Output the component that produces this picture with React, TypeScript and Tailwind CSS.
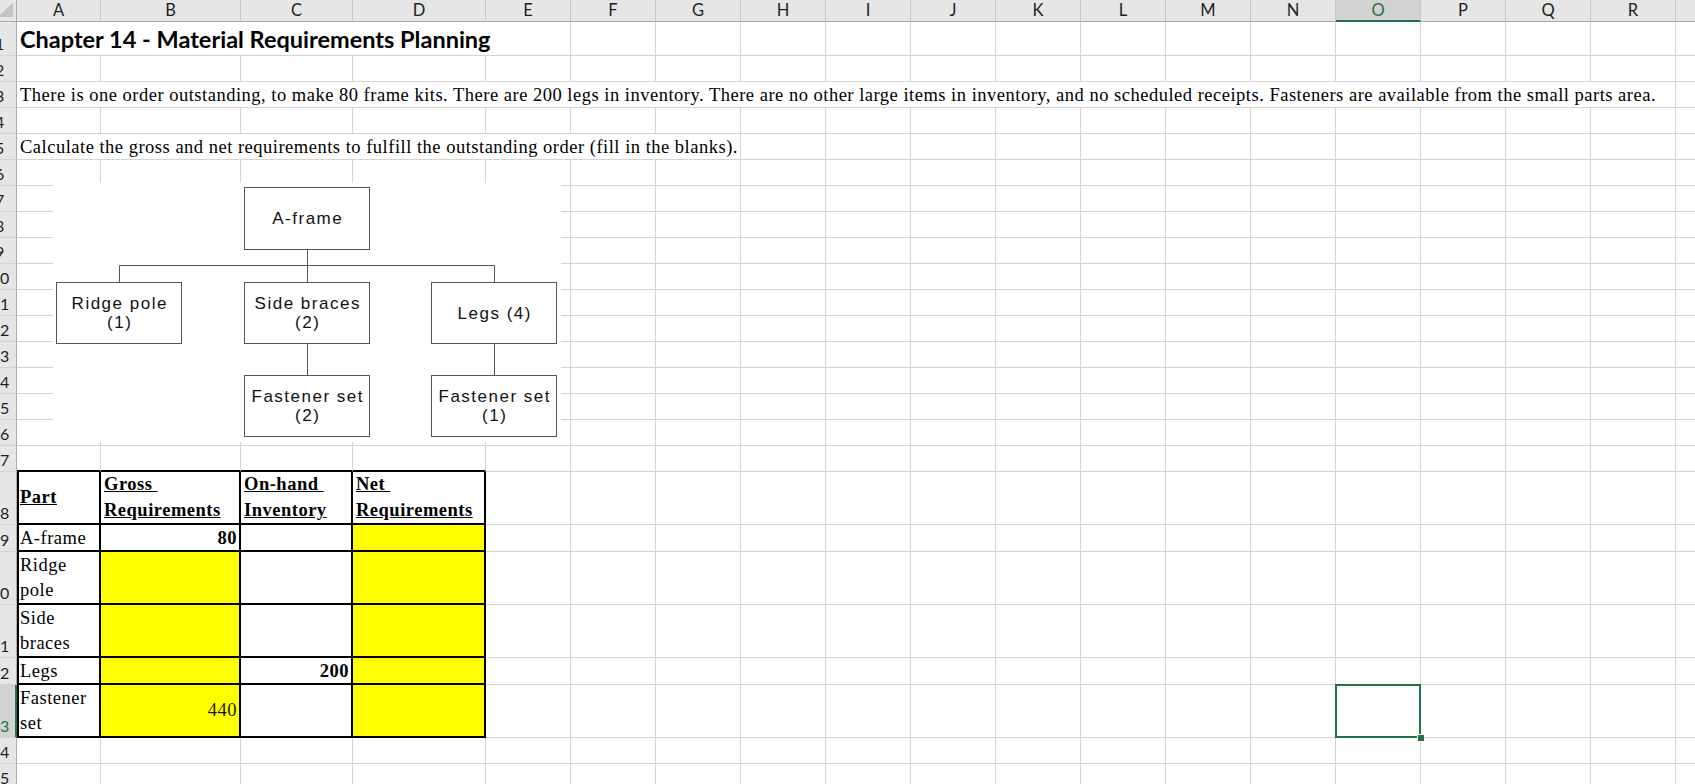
import React from "react";

// column widths A..S (S is cut by the window edge)
const COL_W = [
  "w-[84px]", "w-[140px]", "w-[112px]", "w-[133px]",
  "w-[85px]", "w-[85px]", "w-[85px]", "w-[85px]", "w-[85px]", "w-[85px]", "w-[85px]",
  "w-[85px]", "w-[85px]", "w-[85px]", "w-[85px]", "w-[85px]", "w-[85px]", "w-[85px]",
  "w-[85px]",
];
const LETTERS = "ABCDEFGHIJKLMNOPQRS".split("");
const SEL_COL = 14; // O

const GRID = "border-r border-b border-[#d4d4d4]";
const TBL = "border-r-2 border-b-2 border-black";
const TXT = "font-['Liberation_Serif',serif] text-[18.5px] tracking-[0.5px] text-black";

function Cell({ w, className = "", children }: { w: string; className?: string; children?: React.ReactNode }) {
  return <div className={`${w} shrink-0 flex ${className}`}>{children}</div>;
}

function Blanks({ from, to = 18 }: { from: number; to?: number }) {
  const out = [];
  for (let i = from; i <= to; i++) out.push(<Cell key={i} w={COL_W[i]} className={GRID} />);
  return <>{out}</>;
}

function RowHead({ n, sel }: { n: number; sel?: boolean }) {
  return (
    <div
      className={`w-[17px] shrink-0 overflow-hidden flex items-end border-b border-b-[#d4d4d4] font-['Lato',sans-serif] ${
        sel ? "bg-[#d2d2d2] border-r-2 border-r-[#217346] text-[#217346]" : "bg-[#e6e6e6] border-r border-r-[#ababab] text-[#1f1f1f]"
      }`}
    >
      <div className="w-[34px] -ml-[17px] shrink-0 text-center text-[16px] leading-[22px]">{n}</div>
    </div>
  );
}

function Row({ n, h, sel, children }: { n: number; h: string; sel?: boolean; children?: React.ReactNode }) {
  return (
    <div className={`flex ${h}`}>
      <RowHead n={n} sel={sel} />
      {children}
    </div>
  );
}

function HeaderRow() {
  return (
    <div className="flex h-[22px] font-['Lato',sans-serif] text-[16.5px]">
      <div className="w-[17px] shrink-0 bg-[#e6e6e6] border-r border-b border-[#ababab]">
        <svg width="16" height="21" viewBox="0 0 16 21">
          <polygon points="13,3 13,17 -3,17" fill="#c4c4c4" />
        </svg>
      </div>
      {LETTERS.map((l, i) =>
        i === SEL_COL ? (
          <div
            key={l}
            className={`${COL_W[i]} shrink-0 bg-[#d2d2d2] border-r border-r-[#c6c6c6] border-b-2 border-b-[#217346] text-center leading-[20px] text-[#217346]`}
          >
            {l}
          </div>
        ) : (
          <div
            key={l}
            className={`${COL_W[i]} shrink-0 bg-[#e6e6e6] border-r border-r-[#c6c6c6] border-b border-b-[#ababab] text-center leading-[21px] text-[#1f1f1f]`}
          >
            {l}
          </div>
        )
      )}
    </div>
  );
}

function Lines({ a, b }: { a: string; b: string }) {
  return (
    <div className="flex flex-col font-bold leading-[26px]">
      <span className="underline whitespace-pre">{a}</span>
      <span className="underline whitespace-pre">{b}</span>
    </div>
  );
}

function TwoLine({ a, b }: { a: string; b: string }) {
  return (
    <div className="flex flex-col leading-[25px]">
      <span>{a}</span>
      <span>{b}</span>
    </div>
  );
}

function Box({ pos, children }: { pos: string; children: React.ReactNode }) {
  return (
    <div
      className={`absolute ${pos} w-[126px] h-[62px] border border-[#555] bg-white flex flex-col items-center justify-center pl-[1.5px] font-['Liberation_Sans',Arial,sans-serif] text-[17px] leading-[19px] tracking-[1.5px] text-[#111]`}
    >
      {children}
    </div>
  );
}

function BomChart() {
  return (
    <div className="absolute left-[53px] top-[183px] w-[508px] h-[259px] bg-white">
      <svg className="absolute inset-0" width="508" height="259" viewBox="0 0 508 259">
        <g stroke="#555" strokeWidth="1" fill="none">
          <path d="M254.5 67 V99" />
          <path d="M66.5 82.5 H441.5" />
          <path d="M66.5 82.5 V99" />
          <path d="M441.5 82.5 V99" />
          <path d="M254.5 161 V192" />
          <path d="M441.5 161 V192" />
        </g>
      </svg>
      <Box pos="left-[191px] top-[4px] h-[63px]">
        <span>A-frame</span>
      </Box>
      <Box pos="left-[3px] top-[99px]">
        <span>Ridge pole</span>
        <span>(1)</span>
      </Box>
      <Box pos="left-[191px] top-[99px]">
        <span>Side braces</span>
        <span>(2)</span>
      </Box>
      <Box pos="left-[378px] top-[99px]">
        <span>Legs (4)</span>
      </Box>
      <Box pos="left-[191px] top-[192px]">
        <span>Fastener set</span>
        <span>(2)</span>
      </Box>
      <Box pos="left-[378px] top-[192px]">
        <span>Fastener set</span>
        <span>(1)</span>
      </Box>
    </div>
  );
}

export default function App() {
  const plain = [6, 7, 8, 9, 10, 11, 12, 13, 14, 15, 16];
  return (
    <div className="relative w-[1695px] h-[784px] overflow-hidden bg-white">
      <HeaderRow />
      <div className={TXT}>
        {/* row 1 - title */}
        <Row n={1} h="h-[34px]">
          <Cell w="w-[554px]" className={`${GRID} items-end px-[3px] pb-[2px]`}>
            <span className="font-['Lato',sans-serif] font-bold text-[23.5px] leading-[28px] tracking-normal whitespace-nowrap">
              Chapter 14 - Material Requirements Planning
            </span>
          </Cell>
          <Blanks from={5} />
        </Row>

        <Row n={2} h="h-[26px]">
          <Blanks from={0} />
        </Row>

        <Row n={3} h="h-[26px]">
          <Cell w="w-[1659px]" className={`${GRID} items-end px-[3px] leading-[24px] whitespace-nowrap`}>
            There is one order outstanding, to make 80 frame kits. There are 200 legs in inventory. There are no other large
            items in inventory, and no scheduled receipts. Fasteners are available from the small parts area.
          </Cell>
          <Blanks from={18} />
        </Row>

        <Row n={4} h="h-[26px]">
          <Blanks from={0} />
        </Row>

        <Row n={5} h="h-[26px]">
          <Cell w="w-[724px]" className={`${GRID} items-end px-[3px] leading-[24px] whitespace-nowrap`}>
            Calculate the gross and net requirements to fulfill the outstanding order (fill in the blanks).
          </Cell>
          <Blanks from={7} />
        </Row>

        {plain.map((n) => (
          <Row key={n} n={n} h="h-[26px]">
            <Blanks from={0} />
          </Row>
        ))}

        {/* row 17 carries the top edge of the table */}
        <Row n={17} h="h-[26px]">
          {[0, 1, 2, 3].map((i) => (
            <Cell key={i} w={COL_W[i]} className="border-r border-r-[#d4d4d4] border-b-2 border-b-black" />
          ))}
          <Blanks from={4} />
        </Row>

        {/* table header */}
        <Row n={18} h="h-[53px]">
          <Cell w={COL_W[0]} className={`${TBL} border-l-2 items-center pl-[1px]`}>
            <span className="font-bold underline">Part</span>
          </Cell>
          <Cell w={COL_W[1]} className={`${TBL} items-end px-[3px]`}>
            <Lines a="Gross " b="Requirements" />
          </Cell>
          <Cell w={COL_W[2]} className={`${TBL} items-end px-[3px]`}>
            <Lines a="On-hand " b="Inventory" />
          </Cell>
          <Cell w={COL_W[3]} className={`${TBL} items-end px-[3px]`}>
            <Lines a="Net " b="Requirements" />
          </Cell>
          <Blanks from={4} />
        </Row>

        <Row n={19} h="h-[27px]">
          <Cell w={COL_W[0]} className={`${TBL} border-l-2 items-end pl-[1px] leading-[24px]`}>
            A-frame
          </Cell>
          <Cell w={COL_W[1]} className={`${TBL} items-end justify-end pr-[2px] leading-[24px] font-bold`}>
            80
          </Cell>
          <Cell w={COL_W[2]} className={TBL} />
          <Cell w={COL_W[3]} className={`${TBL} bg-[#ffff00]`} />
          <Blanks from={4} />
        </Row>

        <Row n={20} h="h-[53px]">
          <Cell w={COL_W[0]} className={`${TBL} border-l-2 items-end pl-[1px]`}>
            <TwoLine a="Ridge" b="pole" />
          </Cell>
          <Cell w={COL_W[1]} className={`${TBL} bg-[#ffff00]`} />
          <Cell w={COL_W[2]} className={TBL} />
          <Cell w={COL_W[3]} className={`${TBL} bg-[#ffff00]`} />
          <Blanks from={4} />
        </Row>

        <Row n={21} h="h-[53px]">
          <Cell w={COL_W[0]} className={`${TBL} border-l-2 items-end pl-[1px]`}>
            <TwoLine a="Side" b="braces" />
          </Cell>
          <Cell w={COL_W[1]} className={`${TBL} bg-[#ffff00]`} />
          <Cell w={COL_W[2]} className={TBL} />
          <Cell w={COL_W[3]} className={`${TBL} bg-[#ffff00]`} />
          <Blanks from={4} />
        </Row>

        <Row n={22} h="h-[27px]">
          <Cell w={COL_W[0]} className={`${TBL} border-l-2 items-end pl-[1px] leading-[24px]`}>
            Legs
          </Cell>
          <Cell w={COL_W[1]} className={`${TBL} bg-[#ffff00]`} />
          <Cell w={COL_W[2]} className={`${TBL} items-end justify-end pr-[2px] leading-[24px] font-bold`}>
            200
          </Cell>
          <Cell w={COL_W[3]} className={`${TBL} bg-[#ffff00]`} />
          <Blanks from={4} />
        </Row>

        <Row n={23} h="h-[53px]" sel>
          <Cell w={COL_W[0]} className={`${TBL} border-l-2 items-end pl-[1px]`}>
            <TwoLine a="Fastener" b="set" />
          </Cell>
          <Cell w={COL_W[1]} className={`${TBL} bg-[#ffff00] items-center justify-end pr-[2px] text-[#1a1a1a]`}>
            440
          </Cell>
          <Cell w={COL_W[2]} className={TBL} />
          <Cell w={COL_W[3]} className={`${TBL} bg-[#ffff00]`} />
          <Blanks from={4} to={13} />
          <div className={`${COL_W[SEL_COL]} shrink-0 relative ${GRID}`}>
            <div className="absolute -left-px -top-px -right-px -bottom-px border-2 border-[#217346]" />
            <div className="absolute -right-[4px] -bottom-[4px] w-[7px] h-[7px] bg-[#217346] border-l border-t border-white" />
          </div>
          <Blanks from={15} />
        </Row>

        <Row n={24} h="h-[26px]">
          <Blanks from={0} />
        </Row>
        <Row n={25} h="h-[26px]">
          <Blanks from={0} />
        </Row>
      </div>

      <BomChart />
    </div>
  );
}
